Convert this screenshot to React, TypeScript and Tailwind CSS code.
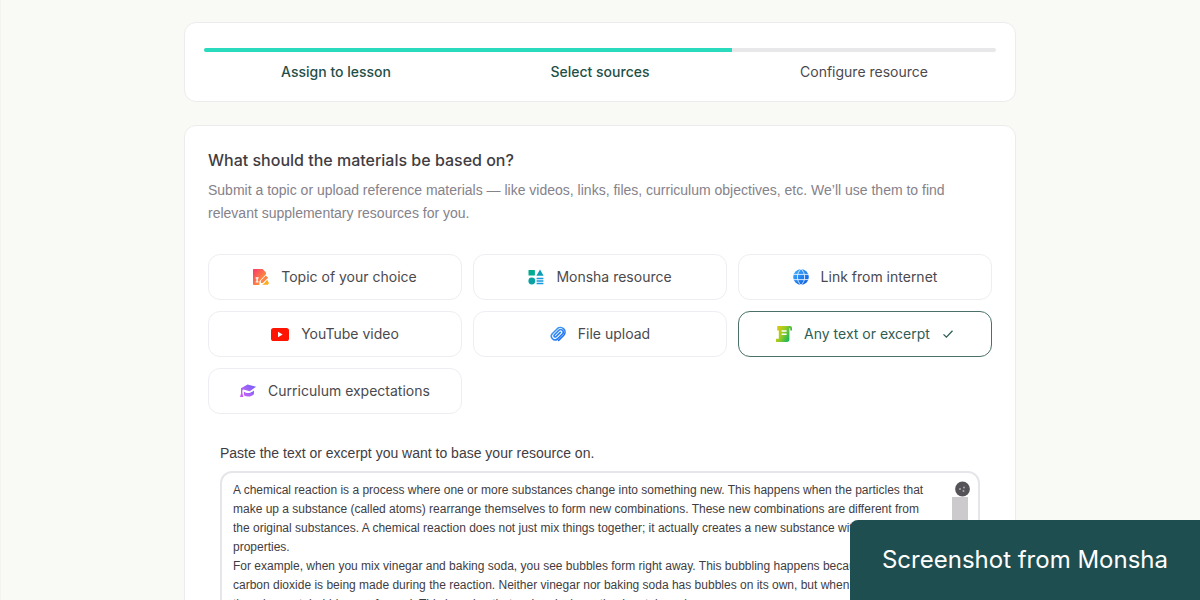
import React from "react";

type IconProps = { className?: string };

function TopicIcon() {
  return (
    <svg viewBox="0 0 16 16" className="size-4" aria-hidden="true">
      <defs>
        <linearGradient id="topic" x1="0" y1="0" x2="1" y2="1">
          <stop offset="0" stopColor="#f9366d" />
          <stop offset="0.55" stopColor="#fd7a48" />
          <stop offset="1" stopColor="#ffb01f" />
        </linearGradient>
      </defs>
      <path d="M.8 0H9.6L13 3.4v1.8L7 11.4a2 2 0 0 0-.6 1.4V16H.8A.8.8 0 0 1 0 15.2V.8A.8.8 0 0 1 .8 0z" fill="url(#topic)" />
      <path d="M12.8 6.6l2.4 2.2-5.6 5.2H7.8v-2.2z" fill="#fe8546" />
      <path d="M14.2 10.8l1.8 3.4-1.2 1.6H9.2l2-1.6z" fill="#ffab1d" />
      <path d="M2.6 8.2h3v1.2h-.8v3h.8v1.2h-3v-1.2h.8v-3h-.8z" fill="#fff" />
    </svg>
  );
}

function ShapesIcon() {
  return (
    <svg viewBox="0 0 16 16" className="size-4" aria-hidden="true">
      <rect x="0.5" y="1" width="6.4" height="5.6" rx="0.6" fill="#02ab92" />
      <path d="M12 0.6l3.6 6.2H8.4z" fill="#0b9db4" />
      <circle cx="3.8" cy="12" r="3.4" fill="#08a2a2" />
      <path d="M8.6 8.8h6.8v1.5H8.6zM8.6 11.3h6.8v1.5H8.6zM8.6 13.8h6.8v1.5H8.6z" fill="#1699dd" />
    </svg>
  );
}

function GlobeIcon() {
  return (
    <svg viewBox="0 0 16 16" className="size-4" aria-hidden="true">
      <defs>
        <linearGradient id="globe" x1="0" y1="0" x2="1" y2="1">
          <stop offset="0" stopColor="#45b4ff" />
          <stop offset="1" stopColor="#0854dc" />
        </linearGradient>
      </defs>
      <circle cx="8" cy="8" r="7.8" fill="url(#globe)" />
      <path d="M0 5.4h16M0 10.6h16M8 0C3.2 4 3.2 12 8 16M8 0c4.8 4 4.8 12 0 16" fill="none" stroke="#e3f0ff" strokeWidth="0.9" />
    </svg>
  );
}

function VideoIcon() {
  return (
    <svg viewBox="0 0 18 13" className="h-[13px] w-[18px]" aria-hidden="true">
      <rect width="18" height="13" rx="2.6" fill="#fe1401" />
      <path d="M7 3.8v5.4l4.7-2.7z" fill="#fff" />
    </svg>
  );
}

function ClipIcon() {
  return (
    <svg viewBox="0 0 16 16" className="size-4" aria-hidden="true" fill="none" strokeLinecap="round" strokeLinejoin="round">
      <defs>
        <linearGradient id="clip" x1="0" y1="0" x2="1" y2="1">
          <stop offset="0" stopColor="#4fa5f6" />
          <stop offset="1" stopColor="#0f63f0" />
        </linearGradient>
      </defs>
      <path
        d="M8.6 14.4l5.2-5.2a4.6 4.6 0 0 0-6.5-6.5L2.2 7.8a3.7 3.7 0 0 0 5.2 5.2l5-5a2.5 2.5 0 0 0-3.6-3.6L4.4 8.9a1.2 1.2 0 0 0 1.7 1.7l4.2-4.2"
        stroke="url(#clip)"
        strokeWidth="1.6"
      />
    </svg>
  );
}

function ScrollIcon() {
  return (
    <svg viewBox="0 0 16 16" className="size-4" aria-hidden="true">
      <defs>
        <linearGradient id="scroll" x1="0" y1="0" x2="1" y2="0.5">
          <stop offset="0" stopColor="#f2c50f" />
          <stop offset="0.5" stopColor="#9ccb22" />
          <stop offset="1" stopColor="#12b65c" />
        </linearGradient>
      </defs>
      <path
        fillRule="evenodd"
        d="M1.2 0H14a2 2 0 0 1 2 2v2.4h-1.8V2.2h-.8V13.4A2.6 2.6 0 0 1 11 16H0v-3.2h2.8V4.4H1.2zM5.6 4.2v1.5h5V4.2zM5.6 7.4v1.5h5V7.4z"
        fill="url(#scroll)"
      />
    </svg>
  );
}

function CapIcon() {
  return (
    <svg viewBox="0 0 16 14" className="h-[14px] w-4" aria-hidden="true">
      <defs>
        <linearGradient id="cap" x1="0" y1="1" x2="1" y2="0">
          <stop offset="0" stopColor="#d058f5" />
          <stop offset="0.5" stopColor="#a565f8" />
          <stop offset="1" stopColor="#6b5cf5" />
        </linearGradient>
      </defs>
      <path d="M7.6.5L16 2.8 9.8 7.2 3.4 5.4l-1 .6v3.4l1 3.6H0l1-3.6V4.2z" fill="url(#cap)" />
      <path d="M3.9 7.4c3.4 2.4 6.6 1.8 10-1v3.9c-2.8 2.6-6.8 3.1-10 1z" fill="url(#cap)" />
      <path d="M3.6 6.8c3 2.4 6.8 2.2 10-.8" fill="none" stroke="#fff" strokeWidth="0.8" />
    </svg>
  );
}

function CheckIcon({ className }: IconProps) {
  return (
    <svg viewBox="0 0 12 10" className={className} aria-hidden="true" fill="none" stroke="currentColor" strokeWidth="1.3">
      <path d="M1.5 5.4L4.4 8.2 10.5 1.8" />
    </svg>
  );
}

const steps = [
  { label: "Assign to lesson", done: true },
  { label: "Select sources", done: true },
  { label: "Configure resource", done: false },
];

const sources = [
  { label: "Topic of your choice", Icon: TopicIcon },
  { label: "Monsha resource", Icon: ShapesIcon },
  { label: "Link from internet", Icon: GlobeIcon },
  { label: "YouTube video", Icon: VideoIcon },
  { label: "File upload", Icon: ClipIcon },
  { label: "Any text or excerpt", Icon: ScrollIcon, selected: true },
  { label: "Curriculum expectations", Icon: CapIcon },
];

const excerpt = `A chemical reaction is a process where one or more substances change into something new. This happens when the particles that
make up a substance (called atoms) rearrange themselves to form new combinations. These new combinations are different from
the original substances. A chemical reaction does not just mix things together; it actually creates a new substance with new
properties.
For example, when you mix vinegar and baking soda, you see bubbles form right away. This bubbling happens because
carbon dioxide is being made during the reaction. Neither vinegar nor baking soda has bubbles on its own, but when
they do react, bubbles are formed. This is a sign that a chemical reaction has taken place.`;

export default function App() {
  return (
    <div className="h-screen overflow-hidden bg-[#f9faf5] pt-[22px] font-['Inter',sans-serif] text-[#3f3d42] shadow-[inset_1px_0_0_#f3f4f0]">
      <main className="mx-auto flex max-w-[832px] flex-col gap-[23px]">
        <nav aria-label="Progress" className="rounded-xl border border-[#ececee] bg-white px-[19px] pt-[25px] pb-[18px]">
          <div className="h-1 overflow-hidden rounded-full bg-[#e8e8ea]">
            <div className="h-full w-2/3 bg-[#2adabc]" />
          </div>
          <ol className="mt-[9px] grid grid-cols-3 text-center text-sm leading-[22px]">
            {steps.map((s) => (
              <li key={s.label} className={s.done ? "font-medium text-[#1f5048]" : "text-[#4b494e]"}>
                {s.label}
              </li>
            ))}
          </ol>
        </nav>

        <section className="rounded-xl border border-[#ececee] bg-white px-[23px] pt-[22px]">
          <h1 className="text-base leading-6 font-medium">What should the materials be based on?</h1>
          <p className="mt-[7px] font-['Liberation_Sans',sans-serif] text-sm leading-[23px] text-[#85828a]">
            Submit a topic or upload reference materials — like videos, links, files, curriculum objectives, etc. We’ll use them to find
            relevant supplementary resources for you.
          </p>

          <div className="mt-[29px] grid grid-cols-3 gap-[11px]">
            {sources.map(({ label, Icon, selected }) => (
              <button
                key={label}
                type="button"
                aria-pressed={!!selected}
                className={
                  selected
                    ? "flex h-[46px] items-center justify-center gap-3 rounded-xl border border-[#4b7069] text-sm text-[#2f5d54]"
                    : "flex h-[46px] items-center justify-center gap-3 rounded-xl border border-[#eeedf1] text-sm text-[#4b494e]"
                }
              >
                <Icon />
                {label}
                {selected && <CheckIcon className="h-[10px] w-3" />}
              </button>
            ))}
          </div>

          <div className="mt-7 px-3 font-['Liberation_Sans',sans-serif]">
            <label htmlFor="excerpt" className="block text-sm leading-[22px]">
              Paste the text or excerpt you want to base your resource on.
            </label>
            <div className="mt-[7px] flex rounded-xl border-2 border-[#e6e5ea] pt-2 pr-2 pl-[11px]">
              <textarea
                id="excerpt"
                rows={10}
                defaultValue={excerpt}
                className="block min-w-0 flex-1 resize-none overflow-hidden text-xs leading-[19px] whitespace-pre outline-none"
              />
              <div className="flex w-[18px] flex-col" aria-hidden="true">
                <svg viewBox="0 0 18 16" className="h-4 w-[18px]">
                  <circle cx="10.5" cy="8" r="7.4" fill="#555357" />
                  <circle cx="8" cy="8" r="1" fill="#aaa" />
                  <circle cx="12" cy="6.5" r="1" fill="#aaa" />
                  <circle cx="11.5" cy="10" r="1" fill="#aaa" />
                </svg>
                <div className="w-4 flex-1 bg-[#cccacd]" />
              </div>
            </div>
          </div>
        </section>
      </main>

      <div className="fixed right-0 bottom-0 flex h-20 items-center rounded-tl-lg bg-[#1f4e50] px-8 text-2xl text-white">
        Screenshot from Monsha
      </div>
    </div>
  );
}
